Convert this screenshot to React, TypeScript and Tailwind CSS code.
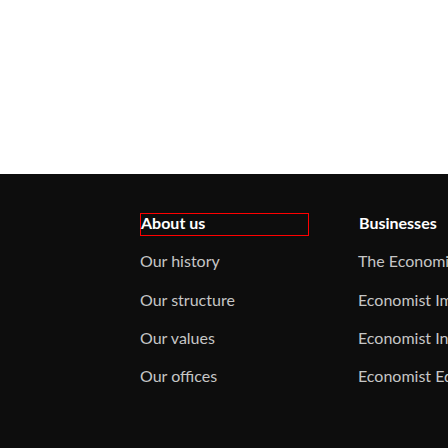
const aboutLinks = ["Our history", "Our structure", "Our values", "Our offices"];
const businessLinks = [
  "The Economist Group",
  "Economist Impact",
  "Economist Intelligence",
  "Economist Education",
];

type ColumnProps = {
  title: string;
  links: string[];
  focused?: boolean;
};

const FooterColumn: React.FC<ColumnProps> = ({ title, links, focused }) => {
  return (
    <div className="flex flex-col gap-[15.25px] min-w-0">
      <a
        href="#"
        className={
          focused
            ? "block w-[169px] h-[23px] border border-[#ff0000] leading-[18px] font-bold text-white whitespace-nowrap"
            : "block w-[169px] h-[23px] border border-transparent leading-[18px] font-bold text-white whitespace-nowrap"
        }
      >
        {title}
      </a>
      {links.map((link) => (
        <a
          key={link}
          href="#"
          className="block h-[23px] leading-[20px] text-[#c6c6c6] whitespace-nowrap"
        >
          {link}
        </a>
      ))}
    </div>
  );
};

export default function App() {
  return (
    <div
      className="flex flex-col w-[448px] h-[448px] overflow-hidden bg-white text-[16px]"
      style={{ fontFamily: "Lato, 'Open Sans', sans-serif" }}
    >
      <div className="h-[174px] shrink-0 bg-white" />
      <div className="flex-1 bg-[#0d0d0d] pl-[140px] pt-[39px]">
        <div className="grid grid-cols-[218px_218px]">
          <FooterColumn title="About us" links={aboutLinks} focused />
          <FooterColumn title="Businesses" links={businessLinks} />
        </div>
      </div>
    </div>
  );
}
